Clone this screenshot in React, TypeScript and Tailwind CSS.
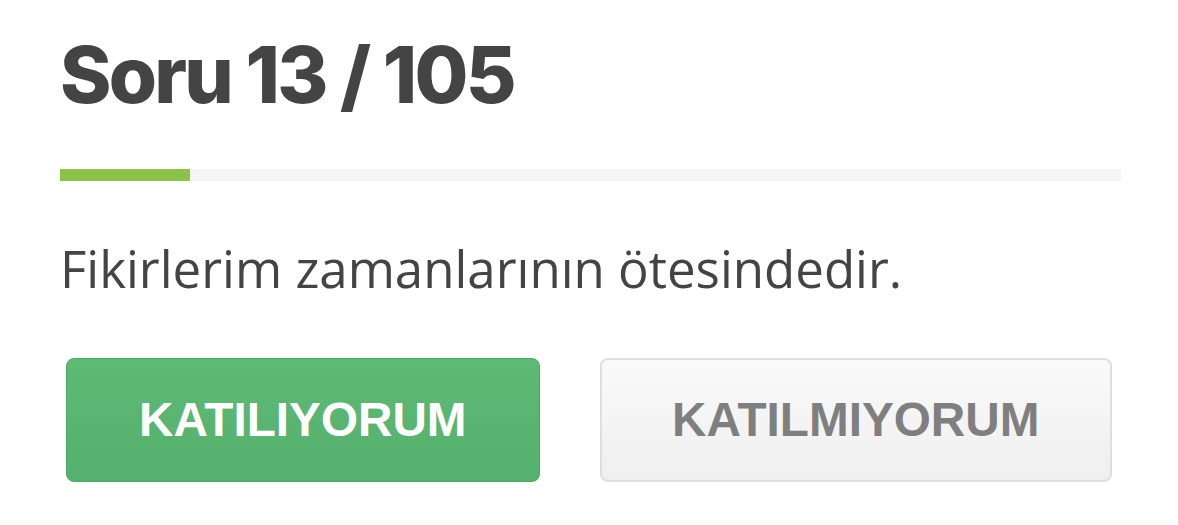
export default function App() {
  return (
    <div className="w-[1178px] h-[525px] bg-white pl-[60px] pr-[57px] pt-[36px]">
      <h1 className="font-['Inter',sans-serif] text-[78px] leading-none font-extrabold tracking-[-0.035em] text-[#444444]">
        Soru 13 / 105
      </h1>

      <div className="mt-[55px] h-[12px] w-full bg-[#f5f5f5]">
        <div className="h-full w-[130px] bg-[#8bc34a]" />
      </div>

      <p className="mt-[57px] font-['Open_Sans',sans-serif] text-[51px] leading-[1.2] text-[#444444]">
        Fikirlerim zamanlarının ötesindedir.
      </p>

      <div className="mt-[59px] flex gap-[60px] pl-[6px]">
        <button className="rounded-[8px] border border-[#4fa866] bg-gradient-to-b from-[#5dba75] to-[#55b06d] px-[72px] py-[34px] font-['Liberation_Sans',Arial,sans-serif] text-[47.7px] leading-[54px] font-bold text-white">
          KATILIYORUM
        </button>
        <button className="rounded-[8px] border-2 border-[#dedede] bg-gradient-to-b from-[#fafafa] to-[#efefef] px-[70.5px] py-[33px] font-['Liberation_Sans',Arial,sans-serif] text-[47.7px] leading-[54px] font-bold text-[#7f7f7f]">
          KATILMIYORUM
        </button>
      </div>
    </div>
  )
}
